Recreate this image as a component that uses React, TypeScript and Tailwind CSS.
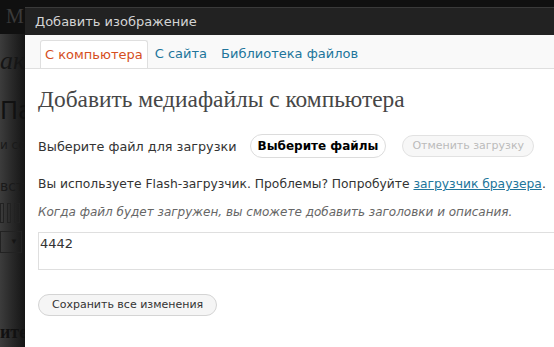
import React from "react";

const ui = { fontFamily: '"DejaVu Sans", Verdana, sans-serif' };
const serif = { fontFamily: '"Liberation Serif", Georgia, serif' };

const Backdrop = () => (
  <div className="relative w-[25px] shrink-0 overflow-hidden bg-[#2f2f2f] bg-gradient-to-r from-[#3c3c3c] to-[#151515]" style={serif}>
    <div className="h-[34px] bg-[#101010] pl-[6px] pt-[6px] text-[20px] leading-none text-[#3a3a3a]">M</div>
    <div className="mt-[14px] text-[26px] italic leading-none text-[#151515]">ак</div>
    <div className="mt-[25px] text-[24px] leading-none text-[#111]" style={ui}>Па</div>
    <div className="mt-[16px] text-[12px] leading-none text-[#1a1a1a]" style={ui}>и сс</div>
    <div className="mt-[28px] text-[14px] leading-none text-[#1a1a1a]" style={ui}>вст</div>
    <div className="mt-[10px] flex h-[20px] gap-[3px]">
      <div className="w-[4px] border border-[#222]" />
      <div className="w-[4px] border border-[#222]" />
      <div className="w-[6px] border border-[#222]" />
    </div>
    <div className="mt-[8px] flex h-[22px] w-[22px] items-center justify-end border border-[#222] pr-[3px] text-[8px] text-[#151515]">▼</div>
    <div className="mt-[70px] text-[18px] font-bold leading-none text-[#111]">ите.</div>
  </div>
);

export default function App() {
  return (
    <div className="flex h-[347px] w-[554px] overflow-hidden bg-[#2f2f2f]" style={ui}>
      <Backdrop />
      <div className="flex min-w-0 flex-1 flex-col">
        <div className="h-[7px] bg-[#101010]" />
        <div className="flex h-[28px] items-center border-t border-[#3a3a3a] bg-[#222] pl-[10px] text-[13px] text-[#d4d4d4]">
          Добавить изображение
        </div>
        <div className="flex-1 bg-white">
          <div className="flex h-[34px] items-end border-b border-[#dfdfdf] bg-[#f9f9f9] pl-[15px] text-[13px]">
            <div className="flex h-[28px] items-center rounded-t-[3px] border border-b-0 border-[#dfdfdf] bg-white px-[4px] text-[#d54e21]">
              С компьютера
            </div>
            <div className="ml-[3px] flex h-[28px] items-center px-[4px] text-[#21759b]">С сайта</div>
            <div className="ml-[6px] flex h-[28px] items-center px-[4px] text-[#21759b]">Библиотека файлов</div>
          </div>
          <div className="pl-[13px] pr-2">
            <h3 className="mt-[19px] text-[23.4px] leading-none text-[#464646]" style={serif}>
              Добавить медиафайлы с компьютера
            </h3>
            <div className="mt-[23px] flex items-center text-[12.8px] text-[#333]">
              <span>Выберите файл для загрузки</span>
              <button className="ml-[13px] h-[24px] rounded-[12px] border border-[#dcdcdc] bg-white px-[7px] text-[12px] font-bold text-black">
                Выберите файлы
              </button>
              <button className="ml-[16px] h-[22px] rounded-[11px] border border-[#e2e2e2] bg-[#f7f7f7] px-[9px] text-[11px] text-[#bbb]">
                Отменить загрузку
              </button>
            </div>
            <p className="mt-[17px] whitespace-nowrap text-[12.3px] text-[#333]">
              Вы используете Flash-загрузчик. Проблемы? Попробуйте{" "}
              <a className="text-[#21759b] underline">загрузчик браузера</a>.
            </p>
            <p className="mt-[9px] text-[12px] italic text-[#666]">
              Когда файл будет загружен, вы сможете добавить заголовки и описания.
            </p>
            <div className="mt-[11px] -mr-[20px] h-[38px] border border-[#dfdfdf] pl-[1px] pt-[1px] text-[13px] text-[#333]">
              4442
            </div>
            <button className="mt-[24px] h-[22px] rounded-[11px] border border-[#d4d4d4] bg-[#f5f5f5] px-[13px] text-[11px] text-[#333]">
              Сохранить все изменения
            </button>
          </div>
        </div>
      </div>
    </div>
  );
}
